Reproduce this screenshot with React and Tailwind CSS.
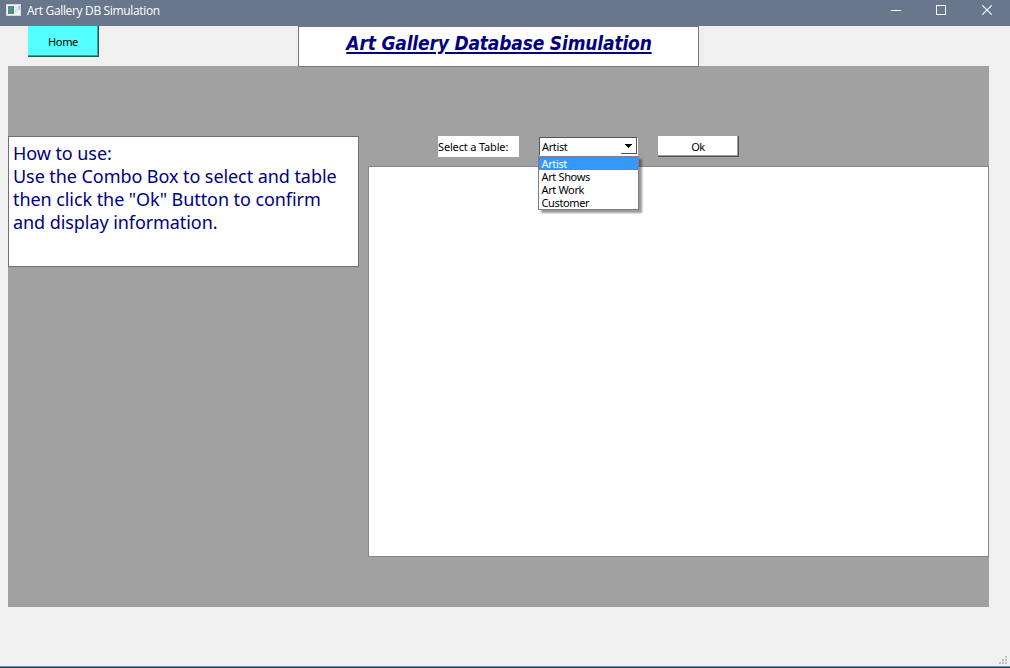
const tables = ["Artist", "Art Shows", "Art Work", "Customer"];

function TitleBar() {
  return (
    <header className="flex h-[26px] shrink-0 items-start bg-[#68778b] text-white">
      <svg className="ml-[6px] mt-[4px] h-[12px] w-[15px]" viewBox="0 0 15 12" shapeRendering="crispEdges">
        <rect width="15" height="12" fill="#d5d8dc" />
        <rect x="1" y="1" width="13" height="10" fill="#f4f5f5" />
        <rect x="2" y="2" width="6" height="8" fill="#4b9077" />
        <rect x="2" y="2" width="3" height="4" fill="#568ba8" />
        <rect x="9" y="2" width="3" height="8" fill="#e3e9e9" />
        <rect x="12" y="2" width="2" height="4" fill="#b5d3cf" />
      </svg>
      <h1 className="ml-[6px] mt-[2px] whitespace-nowrap font-['Open_Sans',sans-serif] text-[12px] leading-[18px] tracking-[-0.34px]">
        Art Gallery DB Simulation
      </h1>
      <svg className="ml-auto h-[26px] w-[130px]" viewBox="0 0 130 26" fill="none" stroke="white">
        <path d="M11 10.5h10M56.500 5.500h9v9h-9z" shapeRendering="crispEdges" />
        <path d="M102.300 5.300l9.400 9.400M111.700 5.300l-9.400 9.400" strokeWidth="1.100" />
      </svg>
    </header>
  );
}

function Combo() {
  return (
    <div className="relative ml-[19px] h-[21px] w-[101px]">
      <div className="mt-px ml-px flex h-[19px] w-[99px] justify-between border border-t-[#555] border-r-white border-b-white border-l-[#555] bg-white pl-[2px]">
        <span className="leading-[18px]">Artist</span>
        <span className="mb-px flex w-[16px] items-center justify-center border-r border-b border-[#555] bg-white">
          <svg className="h-[4px] w-[7px]" viewBox="0 0 7 4" shapeRendering="crispEdges">
            <path d="M0 0h7v1h-1v1h-1v1h-1v1h-1v-1h-1v-1h-1v-1h-1z" fill="black" />
          </svg>
        </span>
      </div>
      <ul className="absolute top-[20px] left-0 z-10 h-[54px] w-[101px] border border-[#7a7f8a] bg-white shadow-[3px_3px_2px_rgba(0,0,0,0.4)]">
        {tables.map((name, i) => (
          <li
            key={name}
            className={
              i === 0
                ? "h-[13px] bg-[#3399ff] pl-[2.5px] leading-[14px] text-white outline-1 -outline-offset-1 outline-dotted outline-[#b87532]"
                : "h-[13px] pl-[2.5px] leading-[14px]"
            }
          >
            {name}
          </li>
        ))}
      </ul>
    </div>
  );
}

export default function App() {
  return (
    <div className="flex h-[668px] w-[1010px] flex-col overflow-hidden bg-[#f0f0f0] font-['Noto_Sans',sans-serif] text-[11px] tracking-[-0.36px] text-black">
      <TitleBar />
      <div className="flex h-[40px] shrink-0 items-start pl-[28px]">
        <button className="h-[31px] w-[71px] border-r border-b border-[#1d5c5c] bg-[#55ffff] pt-[2px] shadow-[inset_-1px_-1px_0_#36a3a3]">
          Home
        </button>
        <h2 className="relative ml-[199px] h-[41px] w-[401px] border border-[#777] bg-white pt-[4px] pl-px text-center font-['DejaVu_Sans_Condensed','DejaVu_Sans',sans-serif] text-[19px] leading-[24px] font-bold tracking-[-0.17px] text-[#000080] italic underline decoration-2 underline-offset-2">
          <span className="whitespace-nowrap">Art Gallery Database Simulation</span>
        </h2>
      </div>
      <main className="ml-[8px] flex h-[541px] w-[981px] shrink-0 bg-[#a1a1a1] pt-[70px]">
        <section className="h-[131px] w-[351px] shrink-0 border border-[#707070] bg-white px-[4px] pt-[5px] text-[18px] leading-[23px] tracking-[-0.07px] whitespace-nowrap text-[#000080]">
          <p>How to use:</p>
          <p>Use the Combo Box to select and table</p>
          <p>then click the "Ok" Button to confirm</p>
          <p>and display information.</p>
        </section>
        <section className="ml-[9px] flex w-[621px] flex-col">
          <div className="flex h-[30px] items-start pl-[70px]">
            <label className="h-[21px] w-[81px] bg-white leading-[22px] tracking-[-0.16px] whitespace-nowrap">Select a Table:</label>
            <Combo />
            <button className="ml-[19px] h-[21px] w-[81px] border-r border-b border-[#555] bg-white pt-[2px] shadow-[inset_-1px_-1px_0_#999]">
              Ok
            </button>
          </div>
          <div className="h-[391px] border border-[#828790] bg-white" />
        </section>
      </main>
      <footer className="mt-auto">
        <svg className="mr-[2px] mb-[2px] ml-auto h-[8px] w-[9px]" viewBox="0 0 9 8" shapeRendering="crispEdges">
          <path d="M6 0h2v2h-2zM3 3h2v2h-2zM6 3h2v2h-2zM0 6h2v2h-2zM3 6h2v2h-2zM6 6h2v2h-2z" fill="#bfbfbf" />
        </svg>
        <div className="h-[2px] border-t border-[#808d9d] bg-[#004080]" />
      </footer>
    </div>
  );
}
